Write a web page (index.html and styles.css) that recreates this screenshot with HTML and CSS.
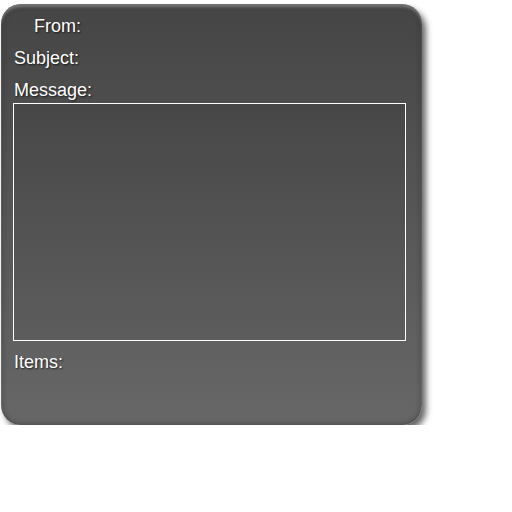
FILE: index.html
```html
<!DOCTYPE html>
<html lang="en">
<head>
  <meta charset="UTF-8">
  <title>Compose</title>
  <link rel="stylesheet" href="styles.css">
</head>
<body>
  <div class="panel">
    <div class="field from">From:</div>
    <div class="field">Subject:</div>
    <div class="field">Message:</div>
    <div class="message-box"></div>
    <div class="field items">Items:</div>
  </div>
</body>
</html>
```
FILE: styles.css
```css
body {
  margin: 0;
  background: #fff;
  font-family: "Liberation Sans", Arial, sans-serif;
}
.panel {
  box-sizing: border-box;
  width: 421px;
  height: 421px;
  margin: 4px 0 0 1px;
  padding: 12px 16px 0 12px;
  border-radius: 20px;
  background: linear-gradient(to bottom, #454545 0%, #5a5a5a 60%, #676767 100%);
  box-shadow: 4px 5px 6px rgba(0,0,0,0.6),
    inset 0 3px 3px rgba(255,255,255,0.3),
    inset 0 0 6px rgba(0,0,0,0.4);
}
.field {
  height: 20px;
  line-height: 20px;
  margin-bottom: 12px;
  padding-left: 1px;
  color: #fff;
  font-size: 18px;
  text-shadow: 1px 1px 2px rgba(0,0,0,0.7);
}
.field.from {
  padding-left: 21px;
}
.message-box {
  box-sizing: border-box;
  width: 393px;
  height: 238px;
  margin: -9px 0 11px 0;
  border: 1px solid #fff;
  background: linear-gradient(to bottom, #474747, #5d5d5d);
}
.field.items {
  margin-bottom: 0;
}
```
